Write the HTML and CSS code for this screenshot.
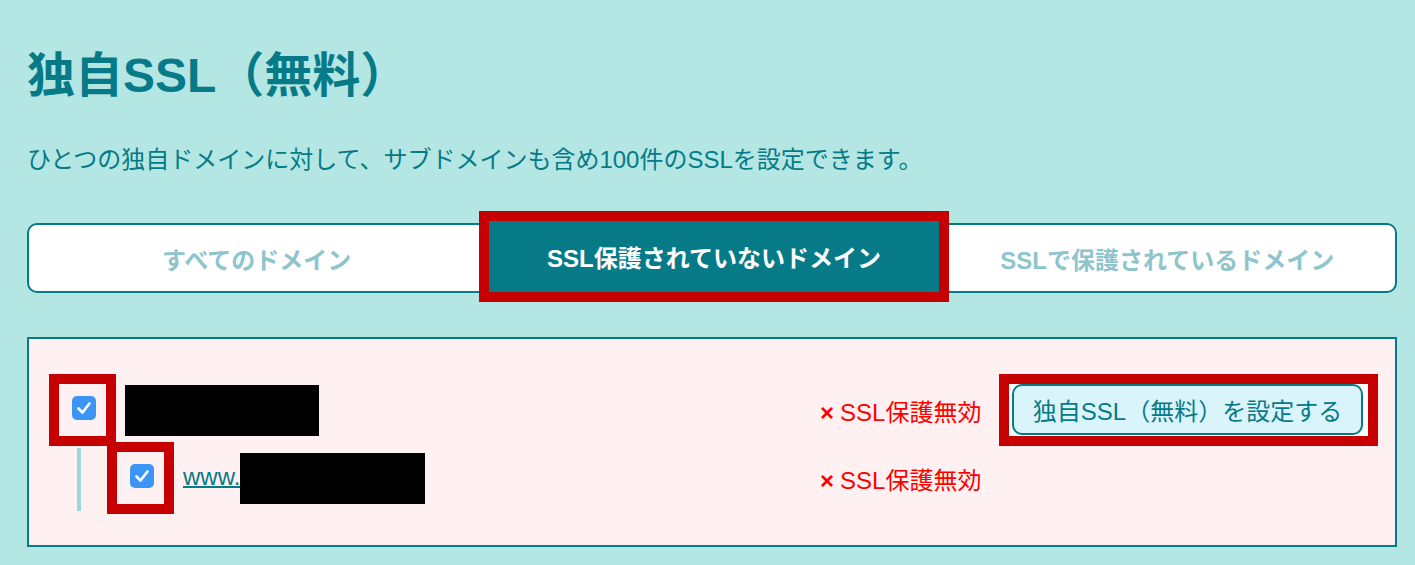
FILE: index.html
```html
<!DOCTYPE html>
<html lang="ja">
<head>
    <meta charset="UTF-8">
    <meta name="viewport" content="width=device-width, initial-scale=1.0">
    <title>独自SSL（無料）</title>
    <link rel="stylesheet" href="styles.css">
</head>
<body>
    <h1 class="page-title">独自SSL（無料）</h1>
    <p class="lead">ひとつの独自ドメインに対して、サブドメインも含め100件のSSLを設定できます。</p>

    <div class="tabs">
        <div class="tab">すべてのドメイン</div>
        <div class="tab active">SSL保護されていないドメイン</div>
        <div class="tab">SSLで保護されているドメイン</div>
    </div>

    <div class="domain-panel">
        <div class="domain-row">
            <div class="domain-name">
                <span class="mark">
                    <span class="checkbox">
                        <svg width="24" height="24" viewBox="0 0 24 24"><polyline points="6.5,12.5 10.5,16.5 17.5,7.5" fill="none" stroke="#fff" stroke-width="2.6" stroke-linecap="round" stroke-linejoin="round"/></svg>
                    </span>
                </span>
                <span class="redacted redacted-main"></span>
            </div>
            <div class="status"><span class="status-icon">×</span>SSL保護無効</div>
            <div class="ssl-action">
                <button class="ssl-button" type="button">独自SSL（無料）を設定する</button>
            </div>
        </div>

        <div class="domain-row sub">
            <div class="domain-name">
                <span class="tree-line"></span>
                <span class="mark">
                    <span class="checkbox">
                        <svg width="24" height="24" viewBox="0 0 24 24"><polyline points="6.5,12.5 10.5,16.5 17.5,7.5" fill="none" stroke="#fff" stroke-width="2.6" stroke-linecap="round" stroke-linejoin="round"/></svg>
                    </span>
                </span>
                <a class="domain-link" href="#">www.<span class="redacted redacted-sub"></span></a>
            </div>
            <div class="status"><span class="status-icon">×</span>SSL保護無効</div>
        </div>
    </div>
</body>
</html>
```

FILE: styles.css
```css
body {
    font-family: "Liberation Sans", "Noto Sans CJK JP", sans-serif;
    background-color: #b4e6e3;
    color: #077a87;
    margin: 0;
    padding: 52px 18px 0 27px;
}

.page-title {
    font-size: 48px;
    font-weight: bold;
    line-height: 1;
    margin: 0;
}

.lead {
    font-size: 24px;
    line-height: 1;
    margin: 48px 0 0;
}

/* タブ */
.tabs {
    display: grid;
    grid-template-columns: repeat(3, 1fr);
    height: 66px;
    margin-top: 51px;
    background-color: #fff;
    border: 2px solid #077a87;
    border-radius: 10px;
}

.tab {
    display: flex;
    align-items: center;
    justify-content: center;
    font-size: 24px;
    font-weight: bold;
    color: #8ec5cd;
}

.tab.active {
    margin: -4px 1px -1px 5px;
    background-color: #077a87;
    color: #fff;
    outline: 10px solid #c60000;
}

/* ドメイン一覧 */
.domain-panel {
    margin-top: 44px;
    padding: 45px 27px 41px 30px;
    background-color: #fff1f1;
    border: 2px solid #077a87;
}

.domain-row {
    display: grid;
    grid-template-columns: 1fr 189px 359px;
    align-items: center;
    height: 52px;
}

.domain-row.sub {
    margin-top: 16px;
}

.domain-name {
    display: flex;
    align-items: center;
    gap: 19px;
    height: 52px;
}

.mark {
    display: flex;
    align-items: center;
    justify-content: center;
    width: 47px;
    height: 52px;
    padding: 0 0 4px 3px;
    box-sizing: border-box;
    outline: 10px solid #c60000;
}

.checkbox {
    display: block;
    width: 24px;
    height: 24px;
    border-radius: 5px;
    background-color: #3b95f6;
}

.checkbox svg {
    display: block;
}

.tree-line {
    align-self: stretch;
    width: 4px;
    margin: -4px 17px -7px 18px;
    background-color: #9fd5dc;
}

.redacted {
    display: inline-block;
    background-color: #000;
    vertical-align: middle;
}

.redacted-main {
    width: 194px;
    height: 51px;
}

.redacted-sub {
    width: 185px;
    height: 51px;
}

.domain-link {
    font-size: 24px;
    color: #077a87;
    text-decoration: underline;
    white-space: nowrap;
}

.status {
    grid-column: 2;
    font-size: 24px;
    color: #ff0000;
    white-space: nowrap;
}

.status-icon {
    font-size: 24px;
    font-weight: bold;
    margin-right: 6px;
}

.ssl-action {
    display: flex;
    padding: 0 5px 1px 3px;
    background-color: #fff;
    outline: 10px solid #c60000;
}

.ssl-button {
    flex: 1;
    height: 51px;
    padding: 0;
    font-family: inherit;
    font-size: 24px;
    color: #077a87;
    background-color: #d9f4fb;
    border: 2px solid #077a87;
    border-radius: 10px;
    cursor: pointer;
}
```
